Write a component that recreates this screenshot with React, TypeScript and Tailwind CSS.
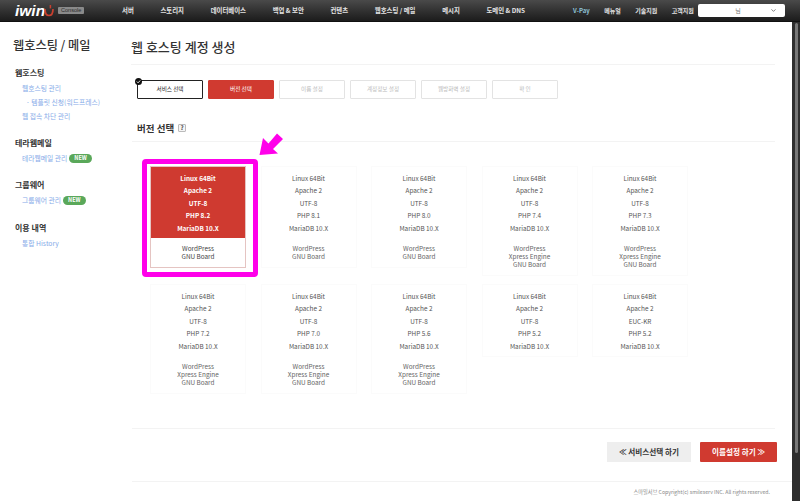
import React from "react";
import { ChevronDown } from "lucide-react";

const navLeft = ["서버", "스토리지", "데이터베이스", "백업 & 보안", "컨텐츠", "웹호스팅 / 메일", "메시지", "도메인 & DNS"];
const navRight = ["메뉴얼", "기술지원", "고객지원"];

const steps = ["서비스 선택", "버전 선택", "이름 설정", "계정정보 설정", "웹방화벽 설정", "확 인"];

const versions = [
 { php: "PHP 8.2", charset: "UTF-8", apps: ["WordPress", "GNU Board"] },
 { php: "PHP 8.1", charset: "UTF-8", apps: ["WordPress", "GNU Board"] },
 { php: "PHP 8.0", charset: "UTF-8", apps: ["WordPress", "GNU Board"] },
 { php: "PHP 7.4", charset: "UTF-8", apps: ["WordPress", "Xpress Engine", "GNU Board"] },
 { php: "PHP 7.3", charset: "UTF-8", apps: ["WordPress", "Xpress Engine", "GNU Board"] },
 { php: "PHP 7.2", charset: "UTF-8", apps: ["WordPress", "Xpress Engine", "GNU Board"] },
 { php: "PHP 7.0", charset: "UTF-8", apps: ["WordPress", "Xpress Engine", "GNU Board"] },
 { php: "PHP 5.6", charset: "UTF-8", apps: ["WordPress", "Xpress Engine", "GNU Board"] },
 { php: "PHP 5.2", charset: "UTF-8", apps: [] },
 { php: "PHP 5.2", charset: "EUC-KR", apps: [] },
];

const sideMenu = [
 { title: "웹호스팅", gap: "mt-0", items: [{ label: "웹호스팅 관리" }, { label: "· 템플릿 신청(워드프레스)", sub: true }, { label: "웹 접속 차단 관리" }] },
 { title: "테라웹메일", gap: "mt-[13px]", items: [{ label: "테라웹메일 관리", isNew: true }] },
 { title: "그룹웨어", gap: "mt-[13px]", items: [{ label: "그룹웨어 관리", isNew: true }] },
 { title: "이용 내역", gap: "mt-[14px]", items: [{ label: "통합 History" }] },
];

const App = () => {
 return (
  <div className="w-[800px] h-[501px] overflow-hidden flex flex-col bg-white font-['Noto_Sans_CJK_KR','Noto_Sans',sans-serif] text-[#333]">
   {/* Top bar */}
   <header className="h-[22px] shrink-0 flex items-center bg-gradient-to-b from-[#4a4a4a] to-[#1c1c1c] border-b border-[#111]">
    <div className="w-[122px] shrink-0 flex items-center pl-[15px]">
     <span className="font-['Liberation_Sans',sans-serif] italic font-bold text-[15.5px] leading-none text-white">iwin</span>
     <svg width="10" height="13" viewBox="0 0 10 13" className="-ml-[1px]">
      <path d="M1 5c0 4 1.6 6.5 4 6.5s4-2.5 4-6.5" fill="none" stroke="#c9402f" strokeWidth="1.7" />
      <path d="M6.4 1v3.4" stroke="#c9402f" strokeWidth="1.5" />
     </svg>
     <span className="ml-[4px] w-[26px] text-center bg-[#8a8a8a] text-[#2a2a2a] text-[5.6px] leading-[7px] rounded-[1px] font-['Liberation_Sans',sans-serif]">Console</span>
    </div>
    <nav className="flex gap-[26.7px] text-[6.4px] font-bold text-[#e4e4e4] whitespace-nowrap">
     {navLeft.map((item) => (
      <span key={item}>{item}</span>
     ))}
    </nav>
    <div className="ml-[48px] flex gap-[14.5px] text-[6px] font-bold text-[#e4e4e4] whitespace-nowrap">
     <span className="text-[#8fc3d8]">V-Pay</span>
     {navRight.map((item) => (
      <span key={item}>{item}</span>
     ))}
    </div>
    <div className="ml-auto mr-[15px] w-[87px] h-[13px] bg-white rounded-[2px] flex items-center text-[6px] text-[#777]">
     <span className="flex-1 text-center pl-[8px]">님</span>
     <ChevronDown className="w-[7px] h-[7px] mr-[8px] text-[#555]" strokeWidth={2.5} />
    </div>
   </header>

   <div className="flex-1 flex min-h-0">
    {/* Sidebar */}
    <aside className="w-[132px] shrink-0 pt-[14px]">
     <h2 className="pl-[13px] text-[12.2px] leading-[18px] text-[#333] font-medium">웹호스팅 / 메일</h2>
     <div className="mt-[12px] pl-[15px]">
      {sideMenu.map((group) => (
       <div key={group.title} className={group.gap}>
        <h3 className="text-[8px] leading-[14px] font-bold text-[#333]">{group.title}</h3>
        <ul className="mt-[1px] pl-[7px] text-[6.8px] text-[#86abe8]">
         {group.items.map((item) => (
          <li key={item.label} className={`h-[14px] flex items-center ${item.sub ? "pl-[4px]" : ""}`}>
           {item.label}
           {item.isNew && (
            <span className="ml-[2px] px-[5px] h-[9px] rounded-full bg-[#5aa85a] text-white text-[5.5px] font-bold leading-[9px]">NEW</span>
           )}
          </li>
         ))}
        </ul>
       </div>
      ))}
     </div>
    </aside>

    {/* Content */}
    <main className="flex-1 min-w-0 flex flex-col">
     <div className="flex-1 min-h-0 pr-[17px]">
      <h1 className="pt-[15px] h-[43px] border-b border-[#f3f3f3] text-[13px] leading-[20px] text-[#333] font-medium -ml-[1px]">웹 호스팅 계정 생성</h1>

      <ol className="mt-[15px] pl-[5px] flex gap-[5px] text-[5.6px]">
       {steps.map((step, i) => (
        <li
         key={step}
         className={`relative w-[66px] h-[19px] flex items-center justify-center rounded-[1px] border ${
          i === 0
           ? "border-[#222] text-[#222] bg-white"
           : i === 1
           ? "border-[#d03a30] bg-[#d03a30] text-white"
           : "border-[#e3e3e3] text-[#bbb] bg-white"
         }`}
        >
         {i === 0 && (
          <svg width="7" height="7" viewBox="0 0 8 8" className="absolute -left-[3px] -top-[3px]">
           <circle cx="4" cy="4" r="4" fill="#111" />
           <path d="M2 4l1.5 1.5L6 2.8" fill="none" stroke="#fff" strokeWidth="1" />
          </svg>
         )}
         {step}
        </li>
       ))}
      </ol>

      <div className="mt-[22px] pl-[5px] h-[21px] border-b border-[#f3f3f3] flex items-start">
       <h2 className="text-[9.5px] leading-[14px] font-bold text-[#333]">버전 선택</h2>
       <span className="ml-[4px] mt-[3px] w-[8px] h-[8px] border border-[#bbb] rounded-[1px] bg-[#f5f5f5] text-[6px] leading-[6px] font-bold text-center text-[#444]">?</span>
      </div>

      <div className="mt-[24px] pl-[18px] grid grid-cols-[repeat(5,96px)] gap-x-[14.5px] gap-y-[8px] items-start">
       {versions.map((v, i) => {
        const selected = i === 0;
        return (
         <div key={i} className={`relative border ${selected ? "border-[#e5c4c2]" : "border-[#fbfbfb]"}`}>
          <div className={`pt-[6px] pb-[3px] text-center text-[6.4px] leading-[12.4px] ${selected ? "bg-[#cf3a30] text-white font-bold" : "text-[#555]"}`}>
           <div>Linux 64Bit</div>
           <div>Apache 2</div>
           <div>{v.charset}</div>
           <div>{v.php}</div>
           <div>MariaDB 10.X</div>
          </div>
          {v.apps.length > 0 && (
           <div className={`pt-[7px] pb-[6px] text-center text-[6.4px] leading-[8px] ${selected ? "text-[#444]" : "text-[#666]"}`}>
            {v.apps.map((app) => (
             <div key={app}>{app}</div>
            ))}
           </div>
          )}
          {selected && (
           <>
            <div className="absolute -left-[9px] -top-[8px] w-[116px] h-[118px] rounded-[4px] border-[5px] border-[#ff00ea]" />
            <svg width="26" height="26" viewBox="0 0 26 26" className="absolute left-[107px] -top-[35px]">
             <path d="M1.5 23 L5 6 L10.5 11.5 L19 1.5 L25 7 L15 17 L20 21.5 Z" fill="#ff00ea" />
            </svg>
           </>
          )}
         </div>
        );
       })}
      </div>
     </div>

     <div className="mr-[17px] h-[53px] shrink-0 border-t border-[#f3f3f3] flex items-start justify-end gap-[9px] pt-[13px]">
      <button className="w-[84px] h-[20px] bg-[#eeeeee] text-[7.6px] font-bold text-[#333]">≪ 서비스선택 하기</button>
      <button className="w-[77px] h-[20px] -mr-[2px] bg-[#d03a30] text-[7.6px] font-bold text-white rounded-[1px]">이름설정 하기 ≫</button>
     </div>

     {/* Footer */}
     <footer className="h-[20px] shrink-0 border-t border-[#f3f3f3] flex items-center justify-end pr-[22px] text-[5.2px] text-[#888]">
      스마일서브 Copyright(c) smileserv INC. All rights reserved.
     </footer>
    </main>

    {/* Scrollbar */}
    <div className="w-[8px] shrink-0 bg-[#2e2e2e] flex justify-center py-[1px]">
     <div className="w-[3px] h-[430px] rounded-full bg-[#777]" />
    </div>
   </div>
  </div>
 );
};

export default App;
